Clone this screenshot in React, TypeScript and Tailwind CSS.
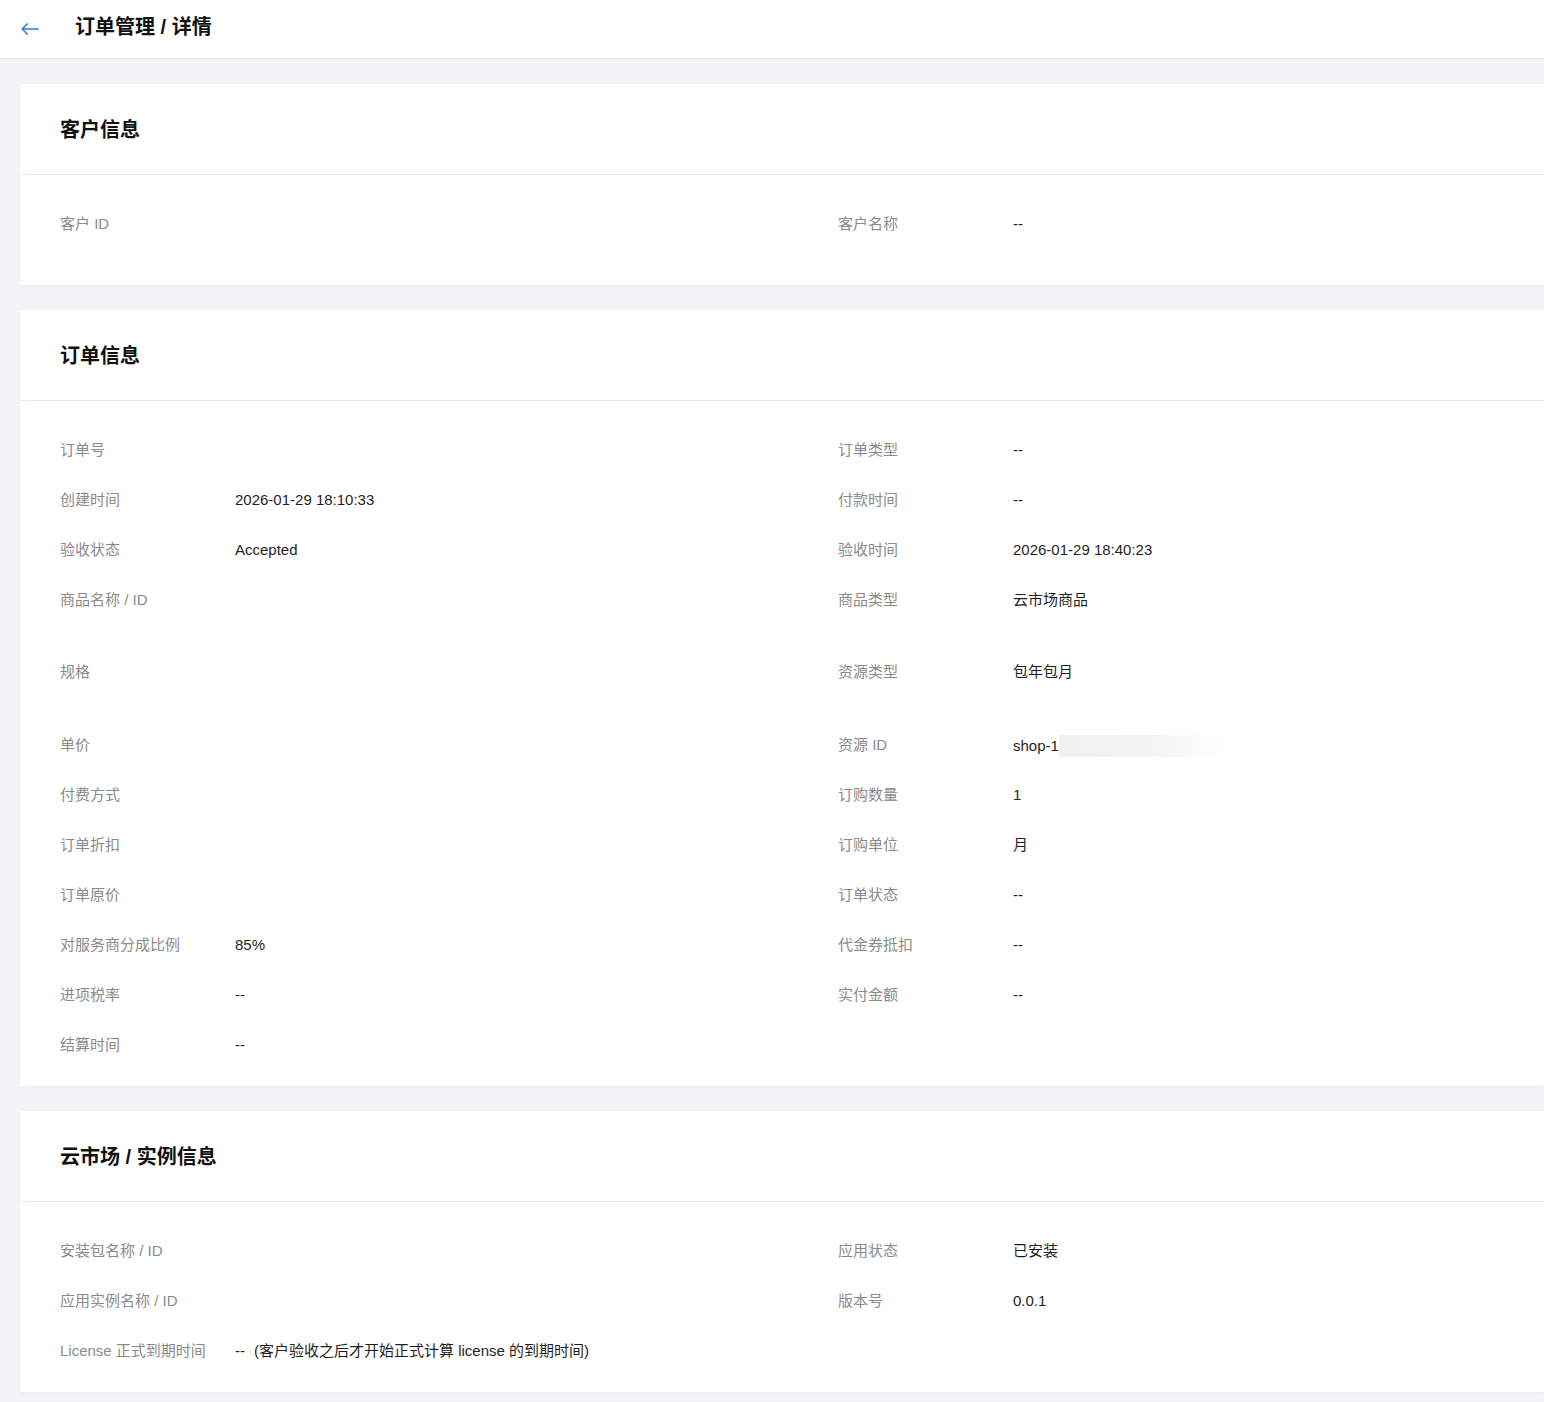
import React from 'react';

type Item = { label: string; value?: React.ReactNode; h?: string };

const font = { fontFamily: '"Liberation Sans", "Noto Sans CJK SC", sans-serif' };

const Row: React.FC<Item> = ({ label, value, h }) => (
  <div className={`flex ${h ?? 'h-[50px]'}`}>
    <div className="w-[175px] shrink-0 pt-[15px] leading-5 text-[15px] text-[#8a8a8a]">{label}</div>
    <div className="pt-[15px] leading-5 text-[15px] text-[#1f1f1f]">{value}</div>
  </div>
);

const Card: React.FC<{ title: string; left: Item[]; right: Item[] }> = ({ title, left, right }) => (
  <section className="bg-white shadow-[0_1px_3px_rgba(0,0,0,0.04)]">
    <div className="h-[91px] flex items-center px-10 border-b border-[#e9eaef]">
      <h2 className="text-[20px] font-bold text-[#111] mt-[2px]">{title}</h2>
    </div>
    <div className="grid grid-cols-[778px_1fr] px-10 pt-6 pb-4">
      <div className="flex flex-col">
        {left.map((it) => (
          <Row key={it.label} {...it} />
        ))}
      </div>
      <div className="flex flex-col">
        {right.map((it) => (
          <Row key={it.label} {...it} />
        ))}
      </div>
    </div>
  </section>
);

export default function App() {
  return (
    <div className="min-h-screen bg-[#f3f4f7]" style={font}>
      <header className="h-[59px] bg-white border-b border-[#e6e7ec] flex items-center">
        <button className="w-[75px] h-full flex items-center pl-[21px] text-[#3b76e8]">
          <svg width="18" height="12" viewBox="0 0 18 12" fill="none" stroke="currentColor" strokeWidth="1.7" strokeLinecap="round" strokeLinejoin="round">
            <path d="M17 6H1.2M6.2 1L1.2 6l5 5" />
          </svg>
        </button>
        <h1 className="text-[20px] font-bold text-[#111] -mt-1">订单管理 / 详情</h1>
      </header>

      <main className="pl-5 pt-[25px] pb-[10px] flex flex-col gap-[25px]">
        <Card
          title="客户信息"
          left={[{ label: '客户 ID', value: '', h: 'h-[70px]' }]}
          right={[{ label: '客户名称', value: '--', h: 'h-[70px]' }]}
        />

        <Card
          title="订单信息"
          left={[
            { label: '订单号', value: '' },
            { label: '创建时间', value: '2026-01-29 18:10:33' },
            { label: '验收状态', value: 'Accepted' },
            { label: '商品名称 / ID', value: '', h: 'h-[72px]' },
            { label: '规格', value: '', h: 'h-[73px]' },
            { label: '单价', value: '' },
            { label: '付费方式', value: '' },
            { label: '订单折扣', value: '' },
            { label: '订单原价', value: '' },
            { label: '对服务商分成比例', value: '85%' },
            { label: '进项税率', value: '--' },
            { label: '结算时间', value: '--' },
          ]}
          right={[
            { label: '订单类型', value: '--' },
            { label: '付款时间', value: '--' },
            { label: '验收时间', value: '2026-01-29 18:40:23' },
            { label: '商品类型', value: '云市场商品', h: 'h-[72px]' },
            { label: '资源类型', value: '包年包月', h: 'h-[73px]' },
            {
              label: '资源 ID',
              value: (
                <span className="flex items-center">
                  shop-1
                  <span className="inline-block w-[172px] h-[22px] bg-gradient-to-r from-[#f1f1f1] via-[#f3f3f3] to-white" />
                </span>
              ),
            },
            { label: '订购数量', value: '1' },
            { label: '订购单位', value: '月' },
            { label: '订单状态', value: '--' },
            { label: '代金券抵扣', value: '--' },
            { label: '实付金额', value: '--' },
          ]}
        />

        <Card
          title="云市场 / 实例信息"
          left={[
            { label: '安装包名称 / ID', value: '' },
            { label: '应用实例名称 / ID', value: '' },
            {
              label: 'License 正式到期时间',
              value: (
                <span>
                  --<span className="ml-[9px]">(客户验收之后才开始正式计算 license 的到期时间)</span>
                </span>
              ),
            },
          ]}
          right={[
            { label: '应用状态', value: '已安装' },
            { label: '版本号', value: '0.0.1' },
          ]}
        />
      </main>
    </div>
  );
}
